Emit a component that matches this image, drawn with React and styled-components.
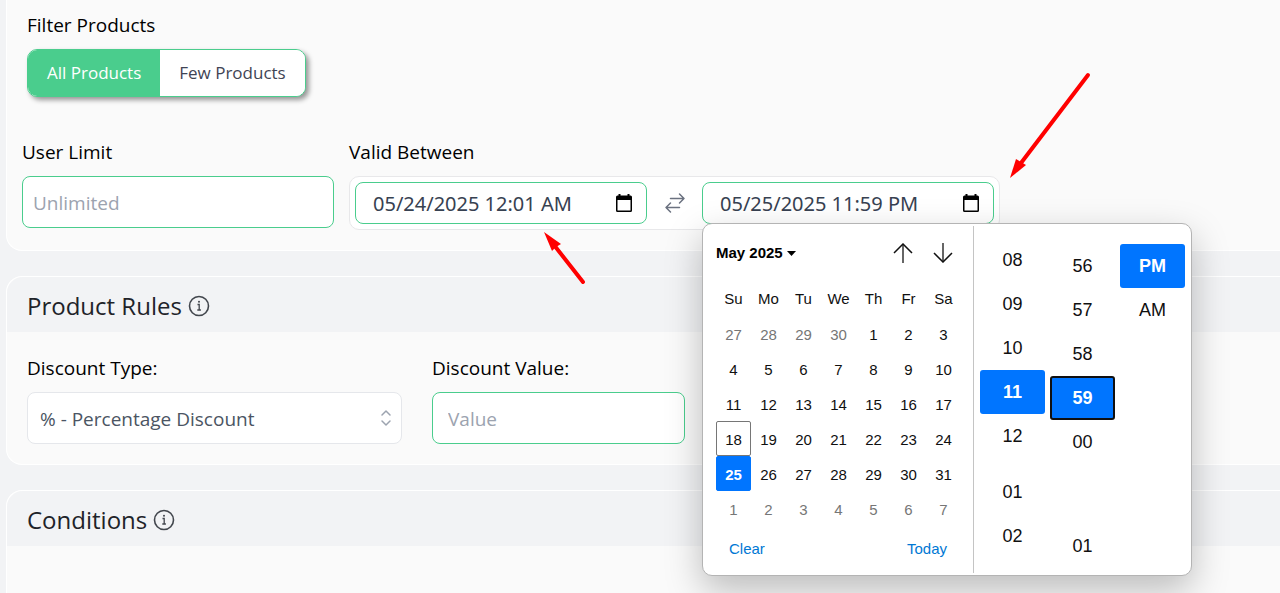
import React from "react";
import styled, { createGlobalStyle, css } from "styled-components";

const GREEN = "#4acd8d";
const BLUE = "#0075ff";

const Global = createGlobalStyle`
  *, *::before, *::after { box-sizing: border-box; }
  body {
    margin: 0;
    background: #f2f3f5;
    color: #000;
    font: 19px/28px "Open Sans", sans-serif;
    overflow: hidden;
  }
  button, input, select { font: inherit; color: inherit; }
`;

const Page = styled.main`
  position: relative;
  display: flex;
  flex-direction: column;
  gap: 25px;
  min-height: 100vh;
  padding-left: 6px;
  overflow: hidden;
`;

const Card = styled.section`
  background: #fafafa;
  border: 1px solid #fff;
  border-right: 0;
  border-radius: ${(p) => (p.$open ? "0 0 0 16px" : "16px 0 0 16px")};
  ${(p) => p.$open && css`border-top: 0;`}
  ${(p) => p.$grow && css`
    flex: 1;
    border-bottom: 0;
    border-bottom-left-radius: 0;
  `}
`;

const CardHead = styled.header`
  display: flex;
  align-items: center;
  gap: 6px;
  height: 55px;
  padding: 2px 20px 0;
  background: #f2f3f5;
  border-top-left-radius: 16px;
  color: #42464d;
`;

const Title = styled.h2`
  margin: 0;
  font-size: 24px;
  line-height: 32px;
  font-weight: 400;
  color: #1f2329;
`;

const FilterBlock = styled.div`
  padding: 11px 20px 0;
`;

const Label = styled.label`
  display: block;
  margin-bottom: 10px;
`;

const Segmented = styled.div`
  display: inline-flex;
  height: 48px;
  margin-bottom: 41px;
  border: 1px solid ${GREEN};
  border-radius: 10px;
  background: #fff;
  overflow: hidden;
  vertical-align: top;
  box-shadow: 3px 3px 5px rgba(0, 0, 0, 0.4);
`;

const Segment = styled.button`
  border: 0;
  padding: 0 19px;
  font-size: 17px;
  background: ${(p) => (p.$active ? GREEN : "#fff")};
  color: ${(p) => (p.$active ? "#fff" : "#3f4454")};
`;

const LimitRow = styled.div`
  display: grid;
  grid-template-columns: minmax(0, 312px) minmax(0, 651px);
  gap: 15px;
  padding: 0 15px 20px;
`;

const RuleRow = styled.div`
  display: grid;
  grid-template-columns: minmax(0, 375px) minmax(0, 253px);
  gap: 30px;
  padding: 22px 20px 20px;
`;

const TextInput = styled.input`
  display: block;
  width: 100%;
  height: 52px;
  padding: 2px ${(p) => (p.$wide ? "15px" : "10px")} 0;
  border: 1px solid ${GREEN};
  border-radius: 8px;
  background: #fff;
  &::placeholder { color: #9ca3af; opacity: 1; }
`;

const SelectWrap = styled.div`
  position: relative;
  color: #9ca3af;
  svg {
    position: absolute;
    right: 4px;
    top: 14px;
    pointer-events: none;
  }
`;

const Select = styled.select`
  appearance: none;
  display: block;
  width: 100%;
  height: 52px;
  padding: 2px 12px 0;
  border: 1px solid #e5e7eb;
  border-radius: 8px;
  background: #fff;
  color: #4b5563;
`;

const RangeBox = styled.div`
  display: grid;
  grid-template-columns: minmax(0, 1fr) 55px minmax(0, 1fr);
  height: 54px;
  padding: 5px;
  border: 1px solid #e8e8ea;
  border-radius: 10px;
  background: #fff;
`;

const Swap = styled.span`
  display: grid;
  place-items: center;
  color: #6b7280;
`;

const DateField = styled.div`
  position: relative;
  display: flex;
  align-items: center;
  height: 42px;
  padding: 0 12px 0 17px;
  border: 1px solid ${GREEN};
  border-radius: 8px;
  background: #fff;
`;

const DateInput = styled.input`
  flex: 1;
  min-width: 0;
  padding: 2px 0 0;
  border: 0;
  outline: 0;
  background: none;
  font-family: "Noto Sans", sans-serif;
  font-size: 20px;
  color: #374151;
`;

const IconButton = styled.button`
  display: grid;
  place-items: center;
  width: ${(p) => p.$size}px;
  height: ${(p) => p.$size}px;
  padding: 0;
  border: 0;
  background: none;
  color: #000;
`;

const Popup = styled.div`
  position: absolute;
  z-index: 2;
  top: 40px;
  left: -1px;
  display: flex;
  width: 490px;
  height: 353px;
  border: 1px solid #b4b4b4;
  border-radius: 10px;
  background: #fff;
  box-shadow: 0 14px 36px rgba(0, 0, 0, 0.25);
  font: 15px/20px "Liberation Sans", Arial, sans-serif;
  color: #101010;
`;

const Calendar = styled.div`
  width: 271px;
  margin: 2px 0;
  padding: 7px 10px 8px 13px;
  border-right: 1px solid #c4c4c4;
`;

const CalendarHead = styled.div`
  display: flex;
  align-items: center;
  height: 40px;
`;

const MonthButton = styled.button`
  display: flex;
  align-items: center;
  gap: 4px;
  margin-right: auto;
  padding: 0;
  border: 0;
  background: none;
  font-weight: 700;
  color: #000;
`;

const Days = styled.table`
  width: 245px;
  border-collapse: collapse;
  table-layout: fixed;
  text-align: center;
  th { height: 43px; padding: 8px 0 0; font-weight: 400; }
  td { height: 35px; padding: 0; }
`;

const Day = styled.button`
  display: block;
  width: 35px;
  height: 35px;
  padding: 2px 0 0;
  border: 1px solid ${(p) => (p.$today ? "#767676" : "transparent")};
  border-radius: 2px;
  background: none;
  color: ${(p) => (p.$muted ? "#767676" : "#101010")};
  ${(p) => p.$selected && css`
    background: ${BLUE};
    border-color: ${BLUE};
    color: #fff;
    font-weight: 700;
  `}
`;

const CalendarFoot = styled.div`
  display: flex;
  justify-content: space-between;
  padding: 13px 16px 0 13px;
`;

const TextButton = styled.button`
  padding: 0;
  border: 0;
  background: none;
  color: #0078d4;
`;

const Times = styled.div`
  display: flex;
  gap: 5px;
  padding: 0 6px;
`;

const TimeColumn = styled.div`
  display: flex;
  flex-direction: column;
  width: 65px;
  padding-top: ${(p) => p.$top}px;
`;

const TimeOption = styled.button`
  height: 44px;
  margin-top: ${(p) => p.$space || 0}px;
  padding: 0;
  border: 0;
  border-radius: 3px;
  background: none;
  font-size: 18px;
  ${(p) => p.$selected && css`
    background: ${BLUE};
    color: #fff;
    font-weight: 700;
  `}
  ${(p) => p.$focused && css`border: 2px solid #101010;`}
`;

const Pointers = styled.svg`
  position: absolute;
  z-index: 3;
  top: 0;
  left: 0;
  pointer-events: none;
`;

const CalendarIcon = () => (
  <svg width="16" height="18" viewBox="0 0 16 18" aria-hidden="true">
    <path fill="currentColor" fillRule="evenodd" d="M2.500 0h2v1.500h7V0h2v1.500h1A1.500 1.500 0 0 1 16 3v13.500a1.500 1.500 0 0 1-1.500 1.500h-13A1.500 1.500 0 0 1 0 16.500V3a1.500 1.500 0 0 1 1.500-1.500h1zM1.500 6v10.500h13V6z" />
  </svg>
);

const SwapIcon = () => (
  <svg width="24" height="24" viewBox="0 0 24 24" fill="none" stroke="currentColor" strokeWidth="1.5" strokeLinecap="round" strokeLinejoin="round" aria-hidden="true">
    <path d="M7.500 21 3 16.500m0 0L7.500 12M3 16.500h13.500m0-13.500L21 7.500m0 0L16.500 12M21 7.500H7.500" />
  </svg>
);

const UpDownIcon = () => (
  <svg width="24" height="24" viewBox="0 0 24 24" fill="none" stroke="currentColor" strokeWidth="1.5" strokeLinecap="round" strokeLinejoin="round" aria-hidden="true">
    <path d="M8 15l4 4 4-4M8 9l4-4 4 4" />
  </svg>
);

const InfoIcon = () => (
  <svg width="22" height="22" viewBox="0 0 22 22" fill="none" stroke="currentColor" aria-hidden="true">
    <circle cx="11" cy="11" r="9.500" strokeWidth="1.6" />
    <circle cx="11" cy="6.700" r="1" fill="currentColor" stroke="none" />
    <path d="M9.500 9.500h1.700v5.300M9.300 15h3.600" strokeWidth="1.3" />
  </svg>
);

const ArrowIcon = ({ down }) => (
  <svg width="20" height="20" viewBox="0 0 20 20" fill="none" strokeWidth="1.5" aria-hidden="true">
    <path stroke="#666" strokeWidth="2" d={down ? "M10 0v18" : "M10 20V2"} />
    <path stroke="#101010" d={down ? "M1 10l9 9 9-9" : "M1 10l9-9 9 9"} />
  </svg>
);

const WEEKDAYS = ["Su", "Mo", "Tu", "We", "Th", "Fr", "Sa"];
const WEEKS = [0, 1, 2, 3, 4, 5].map((w) =>
  WEEKDAYS.map((_, d) => {
    const n = w * 7 + d - 3;
    if (n < 1) return { n: n + 30, muted: true };
    if (n > 31) return { n: n - 31, muted: true };
    return { n };
  })
);

function TimeList({ label, top, options, selected, focused, spaced = {} }) {
  return (
    <TimeColumn $top={top} role="group" aria-label={label}>
      {options.map((o) => (
        <TimeOption key={o} type="button" $selected={o === selected} $focused={o === focused} $space={spaced[o]}>
          {o}
        </TimeOption>
      ))}
    </TimeColumn>
  );
}

function DatePopup() {
  return (
    <Popup role="dialog" aria-label="Choose date and time">
      <Calendar>
        <CalendarHead>
          <MonthButton type="button">
            May 2025
            <svg width="9" height="5" viewBox="0 0 9 5" aria-hidden="true"><path d="M0 0h9L4.500 5z" /></svg>
          </MonthButton>
          <IconButton type="button" $size={40} aria-label="Previous month"><ArrowIcon /></IconButton>
          <IconButton type="button" $size={40} aria-label="Next month"><ArrowIcon down /></IconButton>
        </CalendarHead>
        <Days>
          <thead>
            <tr>{WEEKDAYS.map((d) => <th key={d} scope="col">{d}</th>)}</tr>
          </thead>
          <tbody>
            {WEEKS.map((week, i) => (
              <tr key={i}>
                {week.map((day) => (
                  <td key={day.n}>
                    <Day type="button" $muted={day.muted} $today={day.n === 18} $selected={day.n === 25}>{day.n}</Day>
                  </td>
                ))}
              </tr>
            ))}
          </tbody>
        </Days>
        <CalendarFoot>
          <TextButton type="button">Clear</TextButton>
          <TextButton type="button">Today</TextButton>
        </CalendarFoot>
      </Calendar>
      <Times>
        <TimeList label="Hours" top={14} options={["08", "09", "10", "11", "12", "01", "02"]} selected="11" spaced={{ "01": 12 }} />
        <TimeList label="Minutes" top={20} options={["56", "57", "58", "59", "00", "01"]} selected="59" focused="59" spaced={{ "01": 60 }} />
        <TimeList label="AM or PM" top={20} options={["PM", "AM"]} selected="PM" />
      </Times>
    </Popup>
  );
}

export default function App() {
  return (
    <Page>
      <Global />
      <Card $open>
        <FilterBlock>
          <Label as="div" id="filter">Filter Products</Label>
          <Segmented role="group" aria-labelledby="filter">
            <Segment type="button" $active>All Products</Segment>
            <Segment type="button">Few Products</Segment>
          </Segmented>
        </FilterBlock>
        <LimitRow>
          <div>
            <Label htmlFor="limit">User Limit</Label>
            <TextInput id="limit" placeholder="Unlimited" />
          </div>
          <div>
            <Label htmlFor="from">Valid Between</Label>
            <RangeBox>
              <DateField>
                <DateInput id="from" defaultValue="05/24/2025 12:01 AM" />
                <IconButton type="button" $size={20} aria-label="Open start calendar"><CalendarIcon /></IconButton>
              </DateField>
              <Swap><SwapIcon /></Swap>
              <DateField>
                <DateInput aria-label="Valid until" defaultValue="05/25/2025 11:59 PM" />
                <IconButton type="button" $size={20} aria-label="Open end calendar"><CalendarIcon /></IconButton>
                <DatePopup />
              </DateField>
            </RangeBox>
          </div>
        </LimitRow>
      </Card>

      <Card>
        <CardHead>
          <Title>Product Rules</Title>
          <InfoIcon />
        </CardHead>
        <RuleRow>
          <div>
            <Label htmlFor="type">Discount Type:</Label>
            <SelectWrap>
              <Select id="type"><option>% - Percentage Discount</option></Select>
              <UpDownIcon />
            </SelectWrap>
          </div>
          <div>
            <Label htmlFor="value">Discount Value:</Label>
            <TextInput id="value" placeholder="Value" $wide />
          </div>
        </RuleRow>
      </Card>

      <Card $grow>
        <CardHead>
          <Title>Conditions</Title>
          <InfoIcon />
        </CardHead>
      </Card>

      <Pointers width="1120" height="300" viewBox="0 0 1120 300" aria-hidden="true">
        <g stroke="#f00" strokeWidth="4" strokeLinecap="round">
          <path d="M1088 75 1021 163" />
          <path d="M583 282 554 245" />
        </g>
        <path fill="#f00" d="M1010 178l6-19 10 6z" />
        <path fill="#f00" d="M544 232l17 12-5 3-4 4z" />
      </Pointers>
    </Page>
  );
}
